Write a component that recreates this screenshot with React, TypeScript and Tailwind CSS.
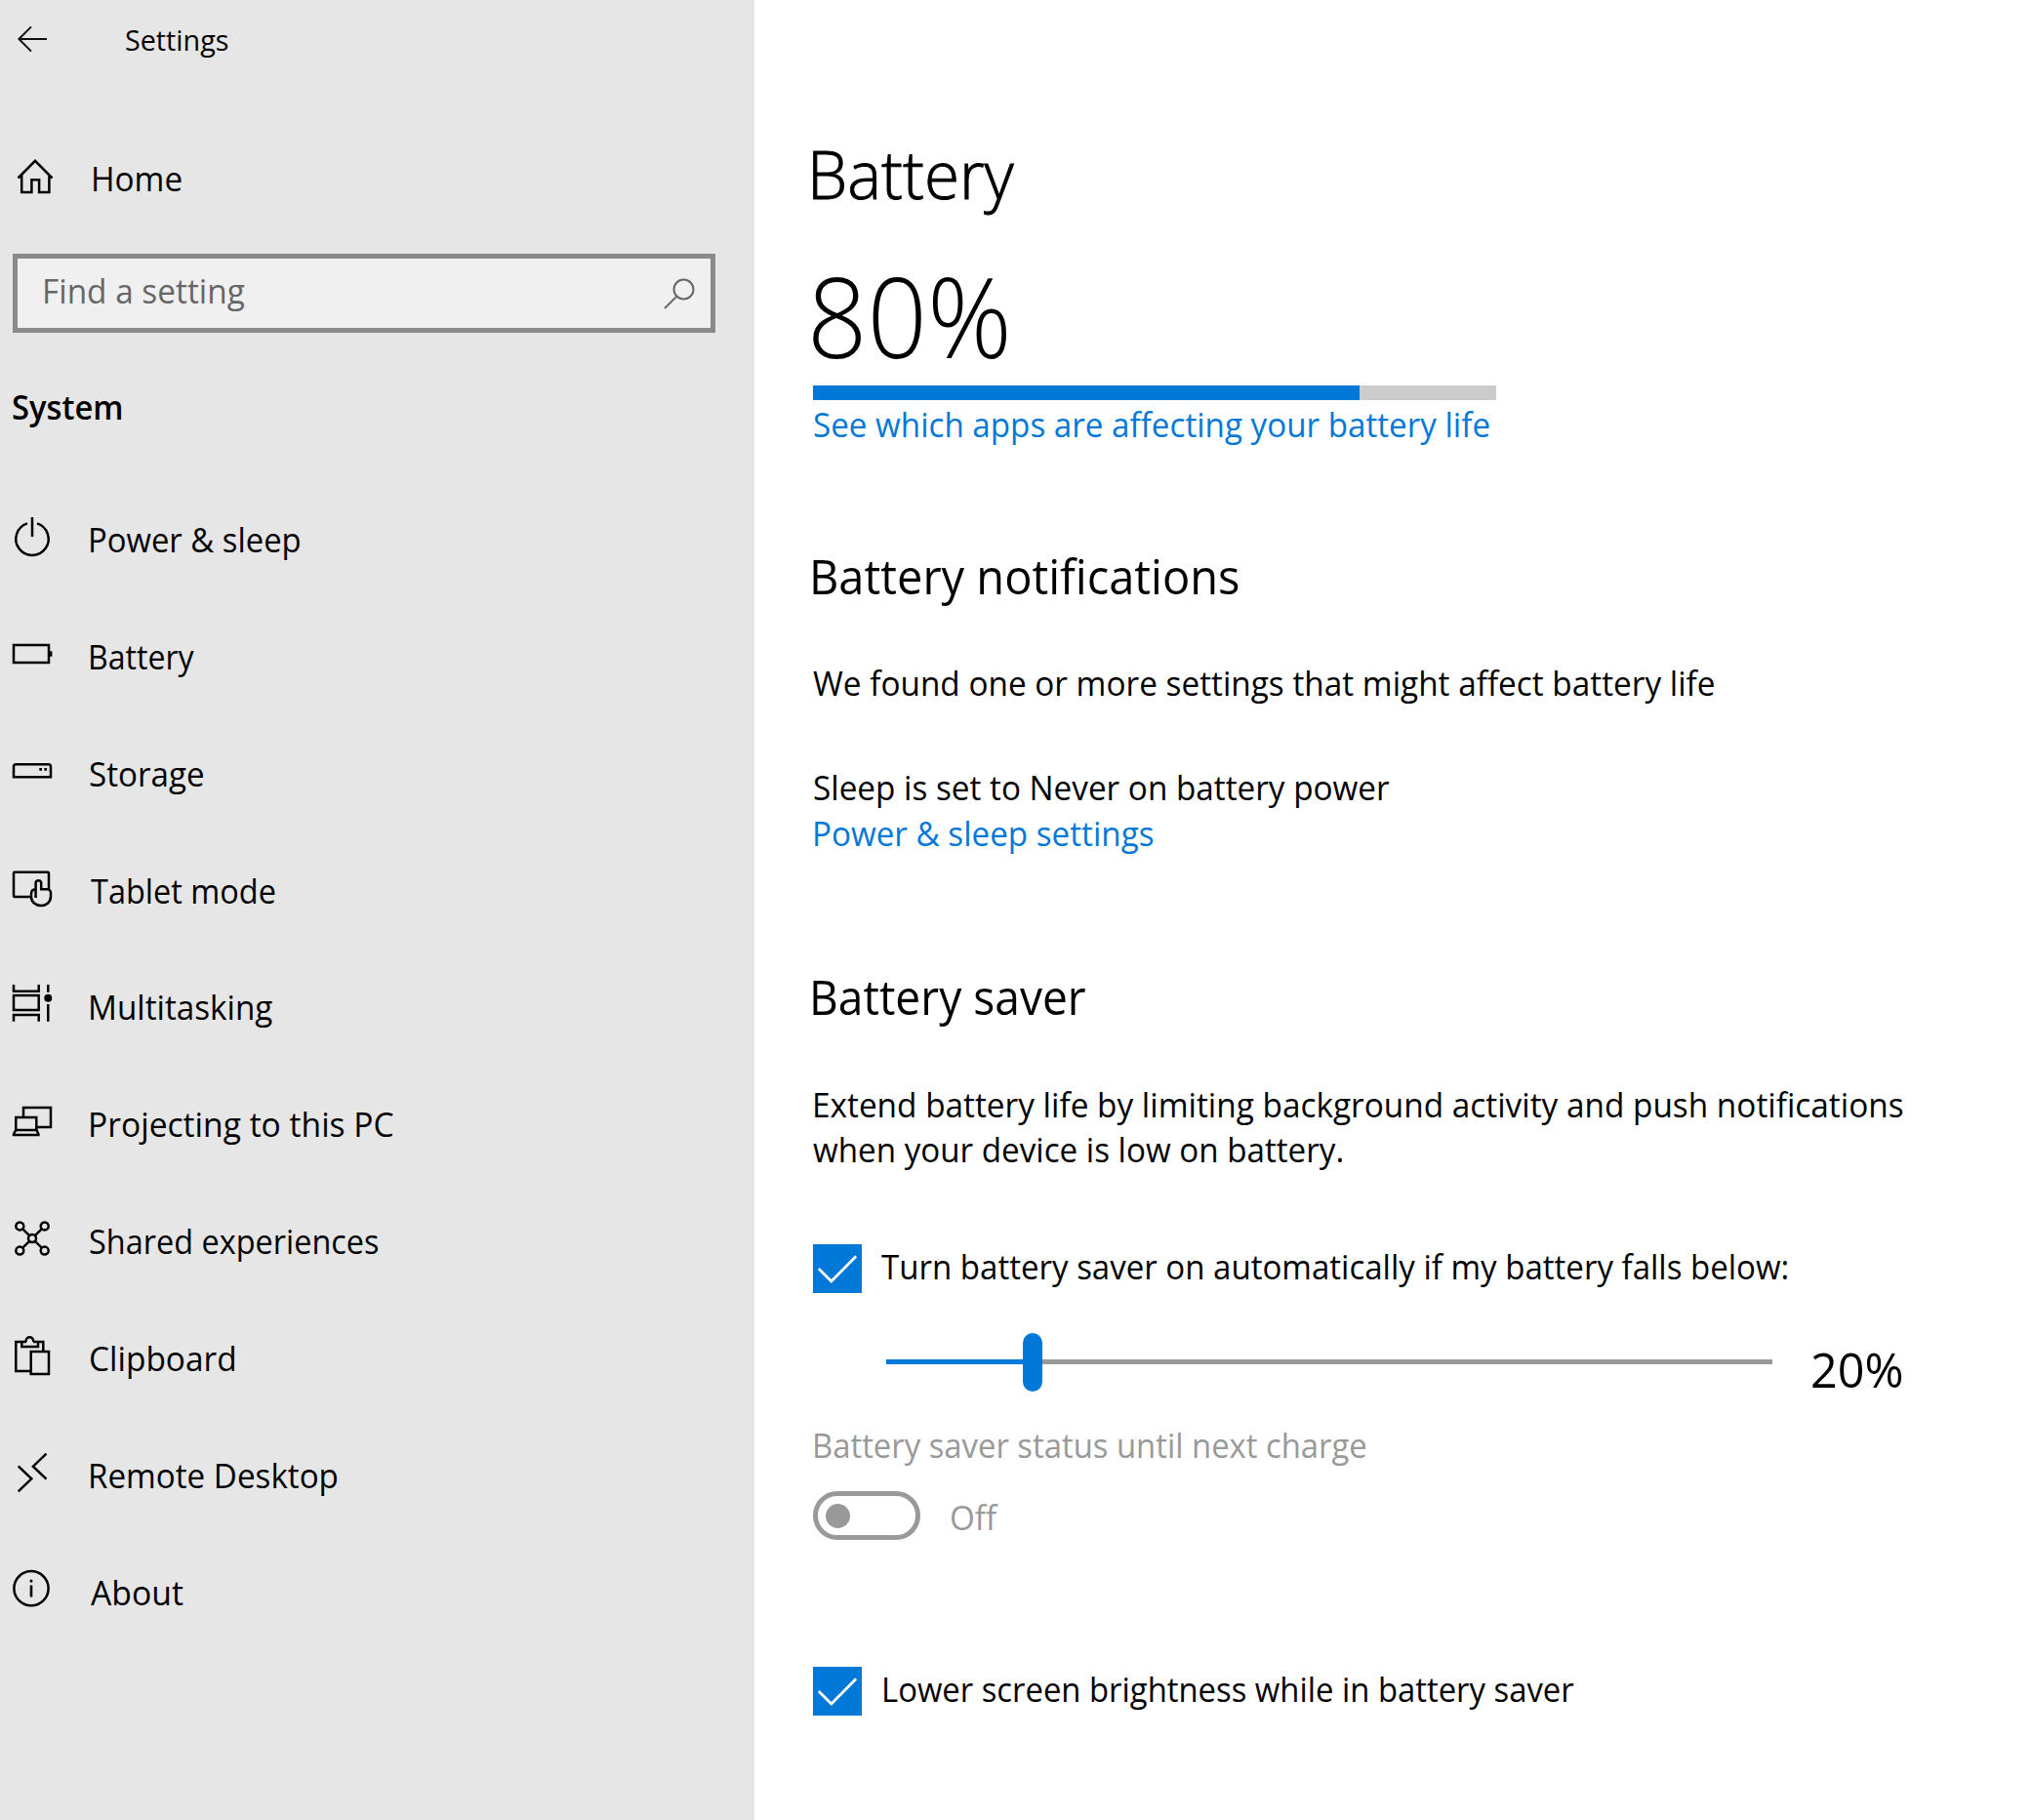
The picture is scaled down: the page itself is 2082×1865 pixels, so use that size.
import type { ReactNode } from "react";

const body = "block h-[48px] w-fit origin-left whitespace-nowrap text-[35px] leading-[50px]";

function Glyph({ children, className = "h-[60px]", h = 60 }: { children: ReactNode; className?: string; h?: number }) {
  return (
    <svg
      viewBox={`0 0 60 ${h}`}
      className={`w-[60px] shrink-0 ${className}`}
      fill="none"
      stroke="currentColor"
      strokeWidth="2.5"
    >
      {children}
    </svg>
  );
}

const navItems: { label: string; row: string; text: string; icon: ReactNode }[] = [
  {
    label: "Power & sleep",
    row: "h-[120px]",
    text: "ml-[30px] scale-x-[0.938]",
    icon: <path d="M28 8.4A16.7 16.7 0 1 0 38 8.4M33 2V22" />,
  },
  {
    label: "Battery",
    row: "h-[120px]",
    text: "ml-[30px] scale-x-[0.917]",
    icon: (
      <>
        <rect x="14" y="13" width="36" height="18" />
        <path d="M52 19.3V24.7" strokeWidth="2.8" />
      </>
    ),
  },
  {
    label: "Storage",
    row: "h-[120px]",
    text: "ml-[31px] scale-x-[0.947]",
    icon: (
      <>
        <path d="M14 28.3V17.3A2 2 0 0 1 16 15.3H50A2 2 0 0 1 52 17.3V28.3Z" />
        <path d="M40.3 20.4H43M45.4 20.4H48" strokeWidth="2.6" />
      </>
    ),
  },
  {
    label: "Tablet mode",
    row: "h-[119px]",
    text: "ml-[32.5px] scale-x-[0.928]",
    icon: (
      <>
        <path d="M31 31H15A1 1 0 0 1 14 30V6.7A1 1 0 0 1 15 5.7H49A1 1 0 0 1 50 6.7V23" />
        <path d="M36.6 32V16.3A2.9 2.9 0 0 1 42.2 16.3V23.3H48.5A3.5 3.5 0 0 1 52 26.8V30.5C52 36.5 47.5 40 42 40C36.5 40 32 36.5 32 31V28C32 25 33.5 23.4 36.6 23.3" />
      </>
    ),
  },
  {
    label: "Multitasking",
    row: "h-[120px]",
    text: "ml-[30px] scale-x-[0.95]",
    icon: (
      <>
        <path d="M14 2V8.7H39.7V2M14 39.7V33H39.7V39.7M49.3 2V9.7M49.3 22V39.7" />
        <rect x="14" y="13" width="25.7" height="15" />
        <circle cx="49.3" cy="15.7" r="4" fill="currentColor" stroke="none" />
      </>
    ),
  },
  {
    label: "Projecting to this PC",
    row: "h-[120px]",
    text: "ml-[30px] scale-x-[0.96]",
    icon: (
      <>
        <path d="M24 17V8H52V28H38" />
        <path d="M16.3 31V18H37.3V31" />
        <path d="M16.3 31H37.3L39.4 35V36H14V35Z" />
      </>
    ),
  },
  {
    label: "Shared experiences",
    row: "h-[120px]",
    text: "ml-[31px] scale-x-[0.927]",
    icon: (
      <>
        <circle cx="20.3" cy="9.4" r="4" />
        <circle cx="45.7" cy="9.4" r="4" />
        <circle cx="20.3" cy="34.6" r="4" />
        <circle cx="45.7" cy="34.6" r="4" />
        <circle cx="33" cy="22" r="4" />
        <path d="M23.2 12.3L30.2 19.2M42.8 12.3L35.8 19.2M23.2 31.7L30.2 24.8M42.8 31.7L35.8 24.8" />
      </>
    ),
  },
  {
    label: "Clipboard",
    row: "h-[120px]",
    text: "ml-[31px] scale-x-[0.955]",
    icon: (
      <>
        <path d="M31 38H16.3V8H27M34 8H44.3V18" />
        <path d="M22.3 8V13H39V8" />
        <path d="M26.6 8V7A3.8 3.8 0 0 1 34.2 7V8" />
        <rect x="31.7" y="18" width="18.3" height="23" />
      </>
    ),
  },
  {
    label: "Remote Desktop",
    row: "h-[120px]",
    text: "ml-[30px] scale-x-[0.948]",
    icon: <path d="M18.7 15.3L32.3 28.3L18.7 41.3M47.5 2.7L33.9 15.7L47.5 28.7" />,
  },
  {
    label: "About",
    row: "h-[120px]",
    text: "ml-[33px] scale-x-[0.963]",
    icon: (
      <>
        <circle cx="32" cy="20.7" r="17.6" />
        <path d="M32 11.8V14.4M32 17.6V29.6" strokeWidth="2.6" />
      </>
    ),
  },
];

function Sidebar() {
  return (
    <aside className="w-[773px] shrink-0 bg-[#e6e6e6]">
      <header className="flex h-20">
        <Glyph className="h-20" h={80}>
          <path d="M48 40H19M32 27.4L19.4 40L32 52.6" stroke="#111" strokeWidth="2" />
        </Glyph>
        <span className="mt-[21px] ml-[68px] block h-10 w-fit origin-left scale-x-[0.99] text-[29px] leading-10">
          Settings
        </span>
      </header>

      <div className="mt-[78px] flex h-[60px]">
        <Glyph>
          <path d="M18.5 24.5L36 6.8L53.5 24.5M22.2 21V39H32.4V26.2H40.1V39H50.4V21" />
        </Glyph>
        <span className={`${body} ml-[33px] scale-x-[0.952]`}>Home</span>
      </div>

      <div className="mt-[42px] ml-[13px] flex h-[81px] w-[720px] justify-between border-[5px] border-[#8a8a8a] bg-[#f0f0f0] pt-2 pr-4 pl-[25px] text-[#666]">
        <span className={`${body} scale-x-[0.953]`}>Find a setting</span>
        <svg viewBox="0 0 32 32" className="mt-[12px] size-8" fill="none" stroke="currentColor" strokeWidth="2">
          <circle cx="20.5" cy="11.5" r="10" />
          <path d="M13.4 18.6L1 31" />
        </svg>
      </div>

      <h2 className={`${body} mt-[51px] ml-[12px] scale-x-[0.936] font-semibold`}>System</h2>

      <nav className="mt-[88px]">
        {navItems.map((item) => (
          <div key={item.label} className={`flex items-start ${item.row}`}>
            <Glyph>{item.icon}</Glyph>
            <span className={`${body} ${item.text}`}>{item.label}</span>
          </div>
        ))}
      </nav>
    </aside>
  );
}

function CheckRow({ label, text, className }: { label: string; text: string; className: string }) {
  return (
    <div className={`flex h-[50px] items-start ${className}`}>
      <svg viewBox="0 0 50 50" className="size-[50px] shrink-0 bg-[#0078d7]" fill="none" stroke="#fff" strokeWidth="2.8">
        <path d="M5.8 25L18.8 38L44.2 12.2" />
      </svg>
      <span className={`${body} -mt-0.5 ${text}`}>{label}</span>
    </div>
  );
}

export default function App() {
  return (
    <div className="flex h-[1865px] w-[2082px] overflow-hidden bg-white font-['Open_Sans',sans-serif] text-black">
      <Sidebar />
      <main className="flex-1 pl-[60px]">
        <h1 className="mt-[132px] -ml-[6.5px] h-[90px] w-fit origin-left scale-x-[0.952] text-[69px] leading-[91px] font-light [-webkit-text-stroke:0.9px_black]">
          Battery
        </h1>
        <div className="mt-[30px] -ml-[6px] h-[140px] w-fit origin-left scale-x-[0.937] text-[115px] leading-[142px] font-light">
          80%
        </div>
        <div className="mt-[3px] h-[15px] w-[700px] bg-[#ccc]">
          <div className="h-full w-4/5 bg-[#0078d7]" />
        </div>
        <a className={`${body} scale-x-[0.948] text-[#0078d7]`}>See which apps are affecting your battery life</a>

        <h2 className="mt-[98px] -ml-[4.5px] h-[68px] w-fit origin-left scale-x-[0.94] text-[50px] leading-[69px]">
          Battery notifications
        </h2>
        <p className={`${body} mt-[51px] scale-x-[0.9525]`}>
          We found one or more settings that might affect battery life
        </p>
        <p className={`${body} mt-[59px] -mb-px scale-x-[0.951]`}>Sleep is set to Never on battery power</p>
        <a className={`${body} -ml-px scale-x-[0.9486] text-[#0078d7]`}>Power &amp; sleep settings</a>

        <h2 className="mt-[110px] -ml-[4px] h-[68px] w-fit origin-left scale-x-[0.923] text-[50px] leading-[69px]">
          Battery saver
        </h2>
        <p className="mt-[52px]">
          <span className={`${body} -mb-0.5 -ml-px scale-x-[0.953]`}>
            Extend battery life by limiting background activity and push notifications
          </span>
          <span className={`${body} scale-x-[0.948]`}>when your device is low on battery.</span>
        </p>

        <CheckRow
          className="mt-[74px]"
          text="ml-[20px] scale-x-[0.944]"
          label="Turn battery saver on automatically if my battery falls below:"
        />

        <div className="mt-[41px] ml-[75px] flex h-[60px] items-start">
          <div className="flex w-[908px] items-start">
            <div className="mt-[27px] h-[5px] w-[140px] bg-[#0078d7]" />
            <div className="h-[60px] w-5 rounded-full bg-[#0078d7]" />
            <div className="mt-[27px] h-[5px] flex-1 bg-[#999]" />
          </div>
          <span className="mt-[3px] ml-[39px] block origin-left scale-x-[0.97] text-[50px] leading-[69px]">20%</span>
        </div>

        <p className={`${body} mt-[30px] -ml-px scale-x-[0.938] text-[#999]`}>
          Battery saver status until next charge
        </p>
        <div className="mt-6 flex h-[50px] items-start text-[#999]">
          <div className="flex h-[50px] w-[110px] items-center rounded-full border-[5px] border-[#999] pl-2">
            <div className="size-[25px] rounded-full bg-[#999]" />
          </div>
          <span className={`${body} mt-0.5 ml-[30px] scale-x-[0.95]`}>Off</span>
        </div>

        <CheckRow
          className="mt-[130px]"
          text="ml-[20px] scale-x-[0.938]"
          label="Lower screen brightness while in battery saver"
        />
      </main>
    </div>
  );
}
